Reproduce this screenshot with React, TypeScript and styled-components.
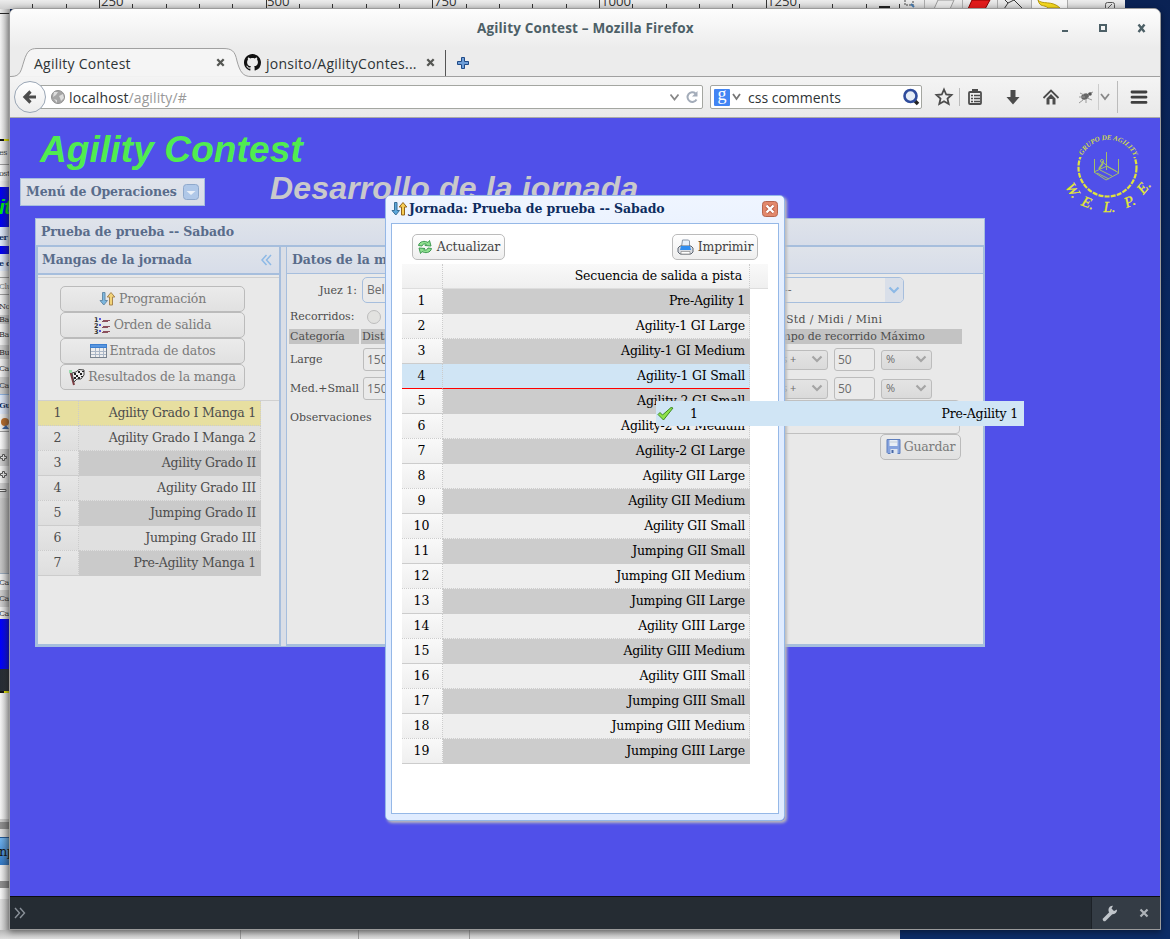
import React from "react";
import styled, { createGlobalStyle, css } from "styled-components";

const slab = `"DejaVu Serif", serif`;
const ui = `"Open Sans", "Noto Sans", sans-serif`;

const Global = createGlobalStyle`
  * { box-sizing: border-box; }
  body { margin: 0; overflow: hidden; }
`;

/* ---------- desktop ---------- */
const Desktop = styled.div`
  position: relative;
  width: 1170px;
  height: 939px;
  overflow: hidden;
  background: linear-gradient(180deg, #0a2254 0%, #082a66 50%, #0c2c66 100%);
  font-family: ${slab};
`;
const EditorWindow = styled.div`
  position: absolute;
  left: 0;
  top: 0;
  width: 1125px;
  height: 9px;
  overflow: hidden;
  background: linear-gradient(#ececec, #cfcfcf);
  svg { display: block; }
`;
const LeftStrip = styled.div`
  position: absolute;
  left: 0;
  top: 9px;
  width: 10px;
  height: 930px;
  display: flex;
  flex-direction: column;
  overflow: hidden;
  background: #ddd;
`;
const StripShade = styled.div`
  position: absolute;
  inset: 0;
  background: linear-gradient(90deg, rgba(60, 60, 60, 0) 0%, rgba(60, 60, 60, 0.38) 100%);
`;
const StripItem = styled.div<{ $h: number; $bg?: string; $c?: string; $bold?: boolean; $slant?: boolean; $s?: number; $top?: string }>`
  flex: none;
  height: ${(p) => p.$h}px;
  background: ${(p) => p.$bg || "#ededed"};
  color: ${(p) => p.$c || "#333"};
  font-weight: ${(p) => (p.$bold ? "bold" : "normal")};
  font-style: ${(p) => (p.$slant ? "italic" : "normal")};
  font-size: ${(p) => p.$s || 8}px;
  font-family: ${(p) => (p.$slant ? `"Liberation Sans", sans-serif` : slab)};
  letter-spacing: -0.5px;
  border-top: ${(p) => (p.$top ? `1px solid ${p.$top}` : "none")};
  display: flex;
  align-items: center;
  justify-content: flex-start;
  text-indent: -1px;
  overflow: hidden;
  white-space: nowrap;
`;
const BottomStrip = styled.div`
  position: absolute;
  left: 0;
  top: 930px;
  width: 900px;
  height: 9px;
  background: linear-gradient(#b5b5b5, #dedede);
  display: flex;
  padding-left: 240px;
  gap: 117px;
  i { width: 1px; height: 9px; background: #999; }
  i:last-child { margin-left: -7px; }
`;

/* ---------- browser window ---------- */
const Browser = styled.div`
  position: absolute;
  left: 9px;
  top: 8px;
  width: 1152px;
  height: 922px;
  border: 1px solid #9b9b9b;
  border-radius: 7px 7px 0 0;
  box-shadow: 0 2px 6px rgba(0, 0, 0, 0.45);
  background: #ececec;
  display: flex;
  flex-direction: column;
  overflow: hidden;
  font-family: ${ui};
`;
const TitleBar = styled.div`
  height: 39px;
  flex: none;
  display: flex;
  align-items: center;
  background: linear-gradient(#fdfdfd, #ececec);
  color: #4d6067;
`;
const TitleText = styled.div`
  width: 220px;
  margin: -1px 0 0 467px;
  white-space: nowrap;
  font: bold 13.5px/20px ${ui};
  letter-spacing: 0.17px;
`;
const WinButtons = styled.div`
  margin-left: auto;
  padding: 0 12px 2px 0;
  svg { display: block; }
`;
const TabBar = styled.div`
  height: 29px;
  flex: none;
  display: flex;
  position: relative;
  background: #ececec;
  color: #2e3436;
  font-size: 14px;
`;
const TabShape = styled.svg`
  position: absolute;
  left: 0;
  top: 0;
`;
const Tab = styled.div<{ $w: number; $pad: number }>`
  position: relative;
  width: ${(p) => p.$w}px;
  padding-left: ${(p) => p.$pad}px;
  display: flex;
  align-items: center;
  white-space: nowrap;
`;
const TabLabel = styled.span<{ $w: number; $pl?: number }>`
  width: ${(p) => p.$w}px;
  letter-spacing: 0.25px;
  line-height: 20px;
  padding-top: 2px;
  padding-left: ${(p) => p.$pl || 0}px;
`;
const NavBar = styled.div`
  height: 41px;
  flex: none;
  display: flex;
  align-items: center;
  position: relative;
  background: linear-gradient(#f4f4f4, #e9e9e9);
  border-bottom: 1px solid #a9a9a9;
  font-size: 14px;
  color: #2e3436;
`;
const BackButton = styled.div`
  width: 32px;
  height: 32px;
  flex: none;
  margin-left: 4px;
  border-radius: 50%;
  border: 1px solid #9aa6b5;
  background: linear-gradient(#fff, #ececec);
  display: flex;
  align-items: center;
  justify-content: center;
  z-index: 1;
`;
const Field = styled.div<{ $w: number; $ml: number; $pl: number }>`
  width: ${(p) => p.$w}px;
  height: 24px;
  flex: none;
  margin-left: ${(p) => p.$ml}px;
  padding-left: ${(p) => p.$pl}px;
  background: #fff;
  border: 1px solid #a4a6a1;
  border-radius: 2px;
  display: flex;
  align-items: center;
  white-space: nowrap;
  svg { flex: none; }
`;
const UrlText = styled.span`
  margin-left: 4px;
  width: 600px;
  padding-top: 1px;
  letter-spacing: 0.1px;
  em { font-style: normal; color: #999; }
`;
const QueryText = styled.span`
  margin-left: 5px;
  padding-top: 1px;
  width: 155px;
`;
const ReloadIcon = styled.svg`
  margin-left: 5px;
`;
const GoogleBadge = styled.span`
  width: 16px;
  height: 17px;
  background: #4285f4;
  color: #fff;
  border-radius: 1px;
  font: 18px/11px "Liberation Serif", serif;
  text-align: center;
`;
const NavIcons = styled.svg`
  display: block;
  flex: none;
  margin-left: 6px;
`;
const DevBar = styled.div`
  height: 33px;
  flex: none;
  border-top: 1px solid #0b0d10;
  background: #252c33;
  display: flex;
  justify-content: space-between;
  align-items: stretch;
`;
const DevPrompt = styled.svg`
  margin: 10px 0 0 4px;
`;
const DevTools = styled.div`
  width: 69px;
  background: #343c45;
  border-left: 1px solid #1c2127;
`;

/* ---------- page ---------- */
const Page = styled.div`
  height: 778px;
  flex: none;
  position: relative;
  background: #5050e9;
  font-family: ${slab};
`;
const PageHeader = styled.header`
  height: 100px;
  display: flex;
  justify-content: space-between;
`;
const Brand = styled.h1`
  margin: 12px 0 -1px 30px;
  font: italic bold 37px/40px "Liberation Sans", sans-serif;
  letter-spacing: 0.12px;
  color: #50ec50;
  white-space: nowrap;
`;
const SubRow = styled.div`
  display: flex;
  align-items: flex-start;
  padding-left: 10px;
`;
const MenuButton = styled.div`
  width: 185px;
  height: 28px;
  margin-top: 9px;
  padding: 0 5px;
  display: flex;
  align-items: center;
  justify-content: space-between;
  border: 1px solid #a6bedd;
  background: linear-gradient(#dfe3ec, #d9dee6);
  color: #596c8b;
  font: bold 12.5px/20px ${slab};
  letter-spacing: -0.09px;
  white-space: nowrap;
`;
const SubTitle = styled.h2`
  margin: 1px 0 0 65px;
  font: italic bold 32px/36px "Liberation Sans", sans-serif;
  letter-spacing: 0.16px;
  color: #c9c9cb;
  white-space: nowrap;
`;
const Logo = styled.svg`
  flex: none;
  margin: 10px 4px 0 0;
`;

const edge = "#a6bedd";
const Panel = styled.section`
  width: 950px;
  height: 429px;
  margin-left: 25px;
  border: 1px solid ${edge};
  display: flex;
  flex-direction: column;
  background: #dadee6;
`;
const BarTitle = styled.div<{ $h: number; $line?: number; $pl?: number }>`
  height: ${(p) => p.$h}px;
  flex: none;
  display: flex;
  align-items: center;
  justify-content: space-between;
  padding: 0 7px 1px ${(p) => p.$pl ?? 5}px;
  border-bottom: ${(p) => p.$line || 1}px solid ${edge};
  background: linear-gradient(#dfe3ea, #d7dde9);
  color: #596c8b;
  font: bold 12.5px/20px ${slab};
  letter-spacing: -0.06px;
  white-space: nowrap;
`;
const Columns = styled.div`
  flex: 1;
  display: flex;
  gap: 5px;
`;
const Side = styled.div`
  width: 245px;
  border: 2px solid ${edge};
  border-top: none;
  background: #e9e9e9;
`;
const Main = styled.div`
  flex: 1;
  border: 1px solid ${edge};
  border-width: 0 1px 2px 1px;
  background: #e9e9e9;
  color: #4d4d4d;
  font-size: 11px;
  letter-spacing: -0.02px;
  overflow: hidden;
`;
const ButtonStack = styled.div`
  margin-top: 2px;
  height: 124px;
  border: 1px solid #d0d0d0;
  border-width: 1px 0;
  padding: 8px 0 0 22px;
  display: flex;
  flex-direction: column;
`;
const Button = styled.div<{ $w: number; $live?: boolean }>`
  width: ${(p) => p.$w}px;
  height: 26px;
  flex: none;
  display: flex;
  align-items: center;
  justify-content: center;
  gap: ${(p) => (p.$live ? 4 : 3)}px;
  border: 1px solid #bbb;
  border-radius: 5px;
  background: ${(p) => (p.$live ? "linear-gradient(#fff, #eee)" : "linear-gradient(#ebebeb, #e1e1e1)")};
  color: ${(p) => (p.$live ? "#444" : "#7b7b7b")};
  font: 12.5px/18px ${slab};
  letter-spacing: ${(p) => (p.$live ? "-0.12px" : "-0.18px")};
  white-space: nowrap;
  svg { flex: none; }
`;

/* ---------- data grid ---------- */
const Grid = styled.div<{ $w: number; $faded?: boolean }>`
  width: ${(p) => p.$w}px;
  font: 12.5px/24px ${slab};
  letter-spacing: -0.23px;
  color: ${(p) => (p.$faded ? "#4d4d4d" : "#000")};
  white-space: nowrap;
`;
type RowTone = "odd" | "even" | "picked" | "drop";
const NumCell = styled.div`
  width: 41px;
  padding-right: 1px;
  text-align: center;
  letter-spacing: 0;
  border-right: 1px dotted #ccc;
  border-bottom: 1px dotted #ccc;
`;
const NameCell = styled.div`
  flex: 1;
  padding-right: 4px;
  text-align: right;
  border-right: 1px dotted #ccc;
  border-bottom: 1px dotted #ccc;
`;
const Row = styled.div<{ $tone: RowTone; $faded?: boolean }>`
  height: 25px;
  display: flex;
  ${NumCell} {
    background: ${(p) => (p.$faded ? "linear-gradient(#e6e6e6, #dedede)" : "linear-gradient(#f9f9f9, #efefef)")};
  }
  ${NameCell} { background: ${(p) => (p.$faded ? "#e0e0e0" : "#eee")}; }
  ${(p) => p.$tone === "odd" && css`
    ${NameCell} { background: ${p.$faded ? "#cacaca" : "#ccc"}; border-color: ${p.$faded ? "#cacaca" : "#ccc"}; }
    ${NumCell} { border-bottom-style: solid; }
  `}
  ${(p) => p.$tone === "picked" && css`
    ${NumCell}, ${NameCell} { background: #e7dfa0; }
  `}
  ${(p) => p.$tone === "drop" && css`
    ${NumCell}, ${NameCell} { background: #d0e5f5; border-bottom: 1px solid red; }
  `}
`;
const GridHead = styled.div`
  width: 366px;
  height: 25px;
  display: flex;
  background: linear-gradient(#f9f9f9, #efefef);
  border-bottom: 1px solid #ddd;
  font: 12.5px/24px ${slab};
  letter-spacing: -0.17px;
  color: #000;
  white-space: nowrap;
  ${NumCell}, ${NameCell} { border-bottom: none; }
  ${NameCell} { flex: none; width: 307px; padding-right: 7px; }
`;

/* ---------- form ---------- */
const Line = styled.div<{ $h: number }>`
  height: ${(p) => p.$h}px;
  padding-left: 3px;
  display: flex;
  align-items: center;
  white-space: nowrap;
`;
const Label = styled.span<{ $w: number; $right?: boolean; $wide?: boolean }>`
  width: ${(p) => p.$w}px;
  flex: none;
  text-align: ${(p) => (p.$right ? "right" : "left")};
  letter-spacing: ${(p) => (p.$wide ? "0.3px" : "inherit")};
  padding-top: ${(p) => (p.$wide ? 5 : 0)}px;
`;
const Gap = styled.span<{ $w: number }>`
  width: ${(p) => p.$w}px;
  flex: none;
`;
const Input = styled.div<{ $w: number; $combo?: boolean; $pl?: number }>`
  width: ${(p) => p.$w}px;
  height: ${(p) => (p.$combo ? 26 : 23)}px;
  flex: none;
  padding-left: ${(p) => p.$pl ?? 3}px;
  display: flex;
  align-items: center;
  justify-content: space-between;
  border: ${(p) => (p.$combo ? `1px solid ${edge}` : "1px solid #bcbcbc")};
  border-radius: ${(p) => (p.$combo ? 5 : 3)}px;
  background: #eaeaea;
  color: #6c6c6c;
  font: 12px/20px ${ui};
  overflow: hidden;
`;
const ComboArrow = styled.span`
  width: 18px;
  align-self: stretch;
  background: #d9dfe9;
  display: flex;
  align-items: center;
  justify-content: center;
`;
const Select = styled.div<{ $w: number; $pl?: number }>`
  width: ${(p) => p.$w}px;
  height: 20px;
  flex: none;
  padding: 0 4px 1px ${(p) => p.$pl ?? 4}px;
  display: flex;
  align-items: center;
  justify-content: space-between;
  border: 1px solid #bcbcbc;
  border-radius: 3px;
  background: linear-gradient(#e4e4e4, #dadada);
  color: #6c6c6c;
  font: 11px/16px ${ui};
`;
const Strip = styled.span<{ $w: number; $first?: boolean }>`
  width: ${(p) => p.$w}px;
  height: 15px;
  line-height: 15px;
  flex: none;
  margin-left: ${(p) => (p.$first ? -1 : 0)}px;
  padding-left: 1px;
  background: #c3c3c3;
`;
const Radio = styled.span`
  width: 14px;
  height: 14px;
  border-radius: 50%;
  border: 1px solid #bdbdbd;
  background: #e2e2e0;
`;
const Notes = styled.div`
  width: 560px;
  height: 34px;
  margin: 0 0 0 22px;
  border: 1px solid #c0c0c0;
  border-radius: 4px;
`;

/* ---------- dialog ---------- */
const Dialog = styled.div`
  position: absolute;
  left: 375px;
  top: 77px;
  width: 400px;
  height: 626px;
  padding: 0 5px 6px;
  border: 1px solid #95b8e7;
  border-radius: 5px;
  background: linear-gradient(#eff5ff, #e0ecff 20%);
  box-shadow: 2px 2px 3px #bbb;
  display: flex;
  flex-direction: column;
`;
const DialogTitle = styled.div`
  height: 27px;
  flex: none;
  display: flex;
  align-items: center;
  padding: 0 1px 1px 0;
  color: #0e2d5f;
  font: bold 12.5px/20px ${slab};
  letter-spacing: -0.08px;
  white-space: nowrap;
  svg { flex: none; margin-right: 1px; }
  svg:last-child { margin: 0 0 0 auto; }
`;
const DialogBody = styled.div`
  flex: 1;
  border: 1px solid #95b8e7;
  background: #fff;
  padding: 10px 10px 0;
`;
const DialogTools = styled.div`
  height: 30px;
  display: flex;
  justify-content: space-between;
  padding: 0 10px;
`;
const DragProxy = styled.div`
  position: absolute;
  left: 646px;
  top: 283px;
  width: 368px;
  height: 25px;
  padding: 0 6px 0 1px;
  display: flex;
  align-items: center;
  justify-content: space-between;
  background: #d0e5f5;
  color: #000;
  font: 12.5px/24px ${slab};
  letter-spacing: -0.2px;
  span { display: flex; align-items: center; gap: 16px; }
`;

/* ---------- icons ---------- */
const SortIcon = ({ dim }: { dim?: boolean }) => (
  <svg width="17" height="16" viewBox="0 0 17 16" opacity={dim ? 0.75 : 1}>
    <path d="M3.500 1.500h2.500v8h2.500L4.800 14 1 9.500h2.500z" fill="#5ba8dd" stroke="#3b6f96" />
    <path d="M10.500 14V6H8.200L12 1.500 15.800 6h-2.300v8z" fill="#f6cd55" stroke="#94661c" />
  </svg>
);
const OrderIcon = () => (
  <svg width="17" height="18" viewBox="0 0 17 18">
    <g fontFamily="DejaVu Sans" fontWeight="bold" fontSize="6.500" fill="#333">
      <text x="0" y="6">1</text><text x="0" y="12">2</text><text x="0" y="18">3</text>
    </g>
    <path d="M5 3h2M5 9h2M5 15h2" stroke="#5656dd" strokeWidth="2" />
    <path d="M9 4.500h7M8 5.500h6M9 10.500h7M8 11.500h6M9 15.500h7M8 16.500h6" stroke="#8a4f5c" />
  </svg>
);
const TableIcon = () => (
  <svg width="17" height="14" viewBox="0 0 17 14">
    <rect x=".5" y=".5" width="16" height="13" fill="#eee" stroke="#78828e" />
    <path d="M0 2h17" stroke="#3c7fd0" strokeWidth="4" />
    <path d="M1 2h15" stroke="#75adee" />
    <path d="M5.500 4v9M9.500 4v9M13.500 4v9M1 7.500h15M1 10.500h15" stroke="#aab6c6" />
  </svg>
);
const FlagIcon = () => (
  <svg width="16" height="17" viewBox="0 0 16 17">
    <path d="M1.500 3L5 16" stroke="#7c3d42" strokeWidth="2" />
    <rect x="0" y="1" width="3" height="3" fill="#9bdcae" />
    <path d="M3 4l4-1 3-2.500L15 1v5l-3 4-4 0-3 3z" fill="#eee" stroke="#444" />
    <path d="M5 4h2v2H5zM9 2h2v2H9zM7 6h2v2H7zM11 4h2v2h-2zM9 8h2v2H9zM5 8h2v2H5zM13 2h2v1h-2zM12 7h2v1h-2z" fill="#222" />
  </svg>
);
const RefreshIcon = () => (
  <svg width="16" height="16" viewBox="0 0 16 16">
    <path d="M1.500 6.500C2.500 2 8 1.500 11 3.500L12.500 1.500l1.500 5.500-6-.5 1.300-1.300C7.500 4.600 5.500 5 5 7z" fill="#8fe08f" stroke="#3f9a52" />
    <path d="M14.500 9.500C13.500 14 8 14.500 5 12.500L3.500 14.500 2 9l6 .5-1.300 1.300c1.800.6 3.800.2 4.300-1.800z" fill="#8fe08f" stroke="#3f9a52" />
  </svg>
);
const PrinterIcon = () => (
  <svg width="17" height="17" viewBox="0 0 17 17">
    <path d="M4.500 8L5.500 1h6l1 1v6z" fill="#e6f0fb" stroke="#8a97a8" />
    <path d="M1 9l2-2h11l2 2v4l-2 2H3l-2-2z" fill="#dadde2" stroke="#5d6570" />
    <path d="M4 7h9l1 4H3z" fill="#2f8df0" />
    <path d="M4 12.500h9v2.500H4z" fill="#fff" stroke="#777" strokeWidth=".6" />
  </svg>
);
const SaveIcon = () => (
  <svg width="15" height="15" viewBox="0 0 14 15">
    <path d="M.5.5h13v14h-12l-1-1z" fill="#86a3de" stroke="#5f7fbd" />
    <rect x="3" y="1" width="8" height="6" fill="#e8eef5" />
    <path d="M3 3h8" stroke="#c4ced8" />
    <rect x="4" y="10" width="7" height="5" fill="#dde4ee" />
    <rect x="5" y="11" width="2" height="3" fill="#4666a5" />
  </svg>
);
const CloseBox = () => (
  <svg width="16" height="16" viewBox="0 0 16 16">
    <rect x=".5" y=".5" width="15" height="15" rx="3" fill="#e2886b" stroke="#b5654e" />
    <path d="M4.500 4.500l7 7M11.500 4.500l-7 7" stroke="#b85b42" strokeWidth="4" />
    <path d="M4.500 4.500l7 7M11.500 4.500l-7 7" stroke="#fff" strokeWidth="2.400" />
  </svg>
);
const Check = () => (
  <svg width="17" height="16" viewBox="0 0 17 16">
    <path d="M1 8.500l2-2 2.500 2.500L14 1.500l2 .5L6.500 14z" fill="#8fe24a" stroke="#3d8a24" strokeLinejoin="round" />
  </svg>
);
const Chevron = ({ color }: { color: string }) => (
  <svg width="12" height="8" viewBox="0 0 12 8">
    <path d="M1.500 1.500L6 6l4.500-4.500" fill="none" stroke={color} strokeWidth="2.200" />
  </svg>
);
const Cross = ({ color }: { color: string }) => (
  <svg width="9" height="9" viewBox="0 0 9 9">
    <path d="M1.300 1.300l6.400 6.400M7.700 1.300L1.300 7.700" stroke={color} strokeWidth="2.300" />
  </svg>
);
const PlusMark = () => (
  <svg width="8" height="8" viewBox="0 0 8 8">
    <path d="M2.500.5h2v2h2v2h-2v2h-2v-2h-2v-2h2z" fill="#eee" stroke="#555" />
  </svg>
);
const Octocat = () => (
  <svg width="17" height="17" viewBox="0 0 16 16">
    <path fill="#111" d="M8 0C3.580 0 0 3.580 0 8c0 3.540 2.290 6.530 5.470 7.590.4.070.55-.17.55-.38 0-.19-.01-.82-.01-1.490-2.010.37-2.530-.49-2.690-.94-.09-.23-.48-.94-.82-1.130-.28-.15-.68-.52-.01-.53.63-.01 1.080.58 1.230.82.72 1.210 1.870.87 2.330.66.070-.52.28-.87.51-1.070-1.780-.2-3.640-.89-3.640-3.950 0-.87.31-1.590.82-2.150-.08-.2-.36-1.020.08-2.120 0 0 .67-.21 2.200.82.64-.18 1.320-.27 2-.27s1.360.090 2 .27c1.530-1.040 2.200-.82 2.200-.82.44 1.100.16 1.920.08 2.120.51.56.82 1.270.82 2.150 0 3.070-1.870 3.750-3.650 3.950.29.25.54.73.54 1.480 0 1.070-.01 1.930-.01 2.200 0 .21.15.46.55.38A8.010 8.010 0 0 0 16 8c0-4.420-3.580-8-8-8z" />
  </svg>
);

/* ---------- data ---------- */
const rounds = ["Agility Grado I Manga 1", "Agility Grado I Manga 2", "Agility Grado II", "Agility Grado III", "Jumping Grado II", "Jumping Grado III", "Pre-Agility Manga 1"];
const sequence = [
  "Pre-Agility 1", "Agility-1 GI Large", "Agility-1 GI Medium", "Agility-1 GI Small", "Agility-2 GI Small",
  "Agility-2 GI Medium", "Agility-2 GI Large", "Agility GII Large", "Agility GII Medium", "Agility GII Small",
  "Jumping GII Small", "Jumping GII Medium", "Jumping GII Large", "Agility GIII Large", "Agility GIII Medium",
  "Agility GIII Small", "Jumping GIII Small", "Jumping GIII Medium", "Jumping GIII Large",
];
const rulerLabels: [number, string][] = [[99, "250"], [265, "500"], [432, "750"], [599, "1000"], [765, "1250"]];

const Ruler = () => (
  <svg width="1125" height="9">
    <g stroke="#333">
      {Array.from({ length: 27 }, (_, i) => {
        const x = Math.round(32.3 + i * 33.33) + 0.5;
        const major = i % 5 === 2;
        return <path key={i} d={`M${x} ${major ? 0 : 4}V8`} />;
      })}
    </g>
    <g fontFamily="Open Sans" fontSize="13.2" fill="#333">
      {rulerLabels.map(([x, t]) => <text key={t} x={x + 2} y="6">{t}</text>)}
    </g>
    <path d="M879 7h11" stroke="#222" strokeWidth="2" />
    <rect x="905" y="-3" width="8" height="8" fill="none" stroke="#444" strokeDasharray="2 1" />
    <path d="M911 4l3 3" stroke="#47a" strokeWidth="2" />
    <path d="M924.500 0v9M962.500 0v9M997.500 0v9M1031.500 0v9M1067.500 0v9" stroke="#aaa" />
    <path d="M938 0h16l-4 9h-16z" fill="#e6e6e6" stroke="#999" />
    <path d="M972 0h18l-5 9h-17z" fill="#e01b1b" stroke="#800" />
    <path d="M1004 9l4-6 6-3 5 5 4 4M1008 3l-3-3" fill="none" stroke="#333" />
    <rect x="1032" width="35" height="9" fill="#f5f5f5" />
    <path d="M1038 0c4 5 14 0 22 8h-12c-4-4-8 0-10-8z" fill="#f4d81f" stroke="#b89b10" />
    <rect x="1105.500" y="2.500" width="9" height="9" rx="2" fill="none" stroke="#555" />
    <path d="M1108 8l4-4" stroke="#555" />
  </svg>
);

const FormRow = ({ label }: { label: string }) => (
  <Line $h={29}>
    <Label $w={73}>{label}</Label>
    <Input $w={41}>150</Input>
    <Gap $w={366} />
    <Select $w={58} $pl={11}><span>s +</span><Chevron color="#a5a5a5" /></Select>
    <Gap $w={6} />
    <Input $w={41}>50</Input>
    <Gap $w={6} />
    <Select $w={51}>%<Chevron color="#a5a5a5" /></Select>
  </Line>
);

export default function App() {
  return (
    <Desktop>
      <Global />
      <EditorWindow><Ruler /></EditorWindow>
      <LeftStrip>
        <StripItem $h={4} $bg="#e8e8e8" />
        <StripItem $h={126} $bg="#f2f2f2" $top="#222" />
        <StripItem $h={2} $bg="linear-gradient(90deg, #111 45%, #ee0 45%)" />
        <StripItem $h={23}>es</StripItem>
        <StripItem $h={17} $bg="#f4f4f4" $top="#999">ost</StripItem>
        <StripItem $h={6} />
        <StripItem $h={40} $bg="#0000ee" $c="#00e810" $bold $slant $s={21}>it</StripItem>
        <StripItem $h={19} $bg="#dce6f7" $c="#0e2d5f" $bold>er</StripItem>
        <StripItem $h={8} $bg="#0000ee" />
        <StripItem $h={17} $bg="#dce6f7" $c="#0e2d5f" $bold>e d</StripItem>
        <StripItem $h={6} />
        <StripItem $h={17} $c="#777" $top="#999">Clu</StripItem>
        <StripItem $h={4} $top="#999" />
        <StripItem $h={17}>Nor</StripItem>
        <StripItem $h={9} $bg="#ccc">Bac</StripItem>
        <StripItem $h={21}>Bai</StripItem>
        <StripItem $h={14} $bg="#ccc">Bus</StripItem>
        <StripItem $h={18}>Car</StripItem>
        <StripItem $h={17} $bg="#ccc">Car</StripItem>
        <StripItem $h={20} $bg="#dce6f7" $c="#0e2d5f" $bold $top="#8ab0e0">Gu</StripItem>
        <StripItem $h={17}>
          <svg width="9" height="12"><circle cx="5" cy="5" r="4" fill="#b56a28" /><path d="M2 12l4-4 3 4z" fill="#3662a3" /></svg>
        </StripItem>
        <StripItem $h={18} $bg="#f6f6f6" $top="#999" />
        <StripItem $h={17} $bg="#ccc"><PlusMark /></StripItem>
        <StripItem $h={17}><PlusMark /></StripItem>
        <StripItem $h={15} $bg="#ccc">
          <svg width="9" height="4" viewBox="0 0 9 4"><path d="M0 .5h6v2H0" fill="#eee" stroke="#555" /></svg>
        </StripItem>
        <StripItem $h={75} $bg="#c4c4c4" />
        <StripItem $h={17} $top="#9ab">Car</StripItem>
        <StripItem $h={17} $bg="#ccc">Car</StripItem>
        <StripItem $h={12}>Car</StripItem>
        <StripItem $h={50} $bg="#0000fa" />
        <StripItem $h={22} $bg="#252c33" />
        <StripItem $h={2} $bg="linear-gradient(90deg, #111 45%, #ee0 45%)" />
        <StripItem $h={126} $bg="#f4f4f4" />
        <StripItem $h={3} $bg="#ccc" />
        <StripItem $h={7} $bg="#8d8d8d" />
        <StripItem $h={8} $bg="#ddd" />
        <StripItem $h={28} $bg="linear-gradient(#6fb2ee, #2f76c4)" $c="#111" $s={13} $top="#1e5594">np</StripItem>
        <StripItem $h={16} $bg="#eee" />
        <StripItem $h={7} $bg="#8d8d8d" />
        <StripItem $h={11} $bg="#f6f6f6" />
        <StripShade />
      </LeftStrip>
      <BottomStrip><i /><i /><i /></BottomStrip>

      <Browser>
        <TitleBar>
          <TitleText>Agility Contest – Mozilla Firefox</TitleText>
          <WinButtons>
            <svg width="88" height="12" viewBox="0 0 88 12" fill="none" stroke="#4d6067">
              <path d="M2 9h6" strokeWidth="2" />
              <rect x="40" y="3" width="6" height="6" strokeWidth="2" />
              <path d="M78.500 2.500l6 7.500M84.500 2.500l-6 7.500" strokeWidth="2.400" />
            </svg>
          </WinButtons>
        </TitleBar>
        <TabBar>
          <TabShape width="1150" height="29" viewBox="0 0 1150 29">
            <path d="M0 28.500H1C11 28.500 11 22 14 13C17 3 20 .5 27 .5H213C222 .5 225 3 227 13C230 24 233 28.500 241 28.500H1150" fill="#f5f5f5" stroke="#a0a0a0" />
            <path d="M435.500 2V28" stroke="#555" />
          </TabShape>
          <Tab $w={233} $pad={24}>
            <TabLabel $w={182}>Agility Contest</TabLabel>
            <Cross color="#555753" />
          </Tab>
          <Tab $w={203} $pad={1}>
            <Octocat />
            <TabLabel $w={165} $pl={5}>jonsito/AgilityContes...</TabLabel>
            <Cross color="#555753" />
          </Tab>
          <Tab $w={40} $pad={11}>
            <svg width="12" height="12" viewBox="0 0 12 12">
              <path d="M4.500.5h3v4h4v3h-4v4h-3v-4h-4v-3h4z" fill="#6f9fd8" stroke="#204a87" />
            </svg>
          </Tab>
        </TabBar>
        <NavBar>
          <BackButton>
            <svg width="16" height="16" viewBox="0 0 16 16"><path d="M8.500 2.500L3 8l5.500 5.500M3 8h11" fill="none" stroke="#4c4c4c" strokeWidth="3.200" /></svg>
          </BackButton>
          <Field $w={666} $ml={-9} $pl={13}>
            <svg width="14" height="14" viewBox="0 0 14 14">
              <circle cx="7" cy="7" r="6.500" fill="#a5a5a5" stroke="#8f8f8f" />
              <path d="M3 2l4 0-2 3-3 2zM8 6l4-2 1 4-3 3-1-3zM3 9l3 1 0 3z" fill="#ddd" />
            </svg>
            <UrlText>localhost<em>/agility/#</em></UrlText>
            <svg width="11" height="8" viewBox="0 0 11 8"><path d="M1.500 1.500l4 5 4-5" fill="none" stroke="#888" strokeWidth="1.800" /></svg>
            <ReloadIcon width="14" height="14" viewBox="0 0 14 14">
              <path d="M11.500 9.500A4.800 4.800 0 1 1 10.500 3.500" fill="none" stroke="#a3acb9" strokeWidth="2" />
              <path d="M12.500 1v5.500H7z" fill="#a3acb9" />
            </ReloadIcon>
          </Field>
          <Field $w={212} $ml={7} $pl={3}>
            <GoogleBadge>g</GoogleBadge>
            <svg width="13" height="8" viewBox="0 0 13 8"><path d="M3 1l3.500 5L10 1" fill="none" stroke="#777" strokeWidth="1.800" /></svg>
            <QueryText>css comments</QueryText>
            <svg width="17" height="18" viewBox="0 0 17 18">
              <path d="M11 12l4 4" stroke="#222" strokeWidth="3.500" />
              <circle cx="7.500" cy="8" r="6" fill="#e6edf7" stroke="#2f4c9c" strokeWidth="2.600" />
            </svg>
          </Field>
          <NavIcons width="226" height="32" viewBox="0 0 226 32" fill="none">
            <path d="M16 8.500l2.200 5 5.300.5-4 3.600 1.200 5.400-4.700-2.800L11.300 23l1.200-5.400-4-3.600 5.300-.5z" stroke="#4c4c4c" strokeWidth="1.800" />
            <path d="M31.500 7v18" stroke="#bbb" />
            <rect x="41" y="11" width="12" height="12" rx="1" stroke="#4c4c4c" strokeWidth="1.800" />
            <path d="M44 9.500h6" stroke="#4c4c4c" strokeWidth="3" />
            <path d="M43 14.500h2M46 14.500h6M43 17.500h2M46 17.500h6M43 20.500h2M46 20.500h6" stroke="#4c4c4c" strokeWidth="1.300" />
            <path d="M82.500 9h5v7h4l-6.500 7.500L78.500 16h4z" fill="#4c4c4c" />
            <path d="M115.500 17l7.500-7.500L130.500 17" stroke="#4c4c4c" strokeWidth="1.800" />
            <path d="M118.500 23.500v-6l4.500-4.500 4.500 4.500v6h-3v-5.500h-3v5.500z" fill="#4c4c4c" />
            <ellipse cx="157" cy="15.500" rx="4" ry="3" fill="#666" transform="rotate(-25 157 15.500)" />
            <path d="M151 16l6 0M155 19l-4 3M158 18l0 4M160 13l5-2M159 17l5 2M152 12l4 2" stroke="#999" />
            <circle cx="162" cy="13" r="1.800" fill="#555" />
            <path d="M170.500 3v26" stroke="#ccc" />
            <path d="M173 13l4 5 4-5" stroke="#888" strokeWidth="1.800" />
            <path d="M189.500 0v32" stroke="#bbb" />
            <path d="M204 11h14M204 16.200h14M204 21.400h14" stroke="#3f3f3f" strokeWidth="2.800" strokeLinecap="round" />
          </NavIcons>
        </NavBar>

        <Page>
          <PageHeader>
            <div>
              <Brand>Agility Contest</Brand>
              <SubRow>
                <MenuButton>
                  Menú de Operaciones
                  <svg width="16" height="16" viewBox="0 0 16 16">
                    <rect x=".5" y=".5" width="15" height="15" rx="3" fill="#b0c8e8" stroke="#8fa9cc" />
                    <path d="M3.500 7h9L8 11z" fill="#eaf0f8" />
                  </svg>
                </MenuButton>
                <SubTitle>Desarrollo de la jornada</SubTitle>
              </SubRow>
            </div>
            <Logo width="94" height="90" viewBox="1062 128 94 90">
              <clipPath id="ringClip"><path d="M1062 157h94v62h-94z" /></clipPath>
              <circle cx="1107.500" cy="167.500" r="29" fill="none" stroke="#dfe33c" strokeWidth="2.200" strokeDasharray="5 1.200" clipPath="url(#ringClip)" />
              <path id="ringTop" d="M1082.500 155.500A28.500 28.500 0 0 1 1134.500 157.500" fill="none" />
              <text fontFamily="Liberation Serif" fontStyle="italic" fontWeight="bold" fontSize="7" fill="#cdd84e">
                <textPath href="#ringTop" textLength="64">GRUPO DE AGILITY</textPath>
              </text>
              <g fontFamily="Liberation Serif" fontStyle="italic" fontSize="15" fill="#e6ea30" stroke="#e6ea30" strokeWidth=".3" textAnchor="middle">
                <text transform="translate(1069 193) rotate(58)">W.</text>
                <text transform="translate(1086.500 207.500) rotate(22)">E.</text>
                <text transform="translate(1109.500 212)">L.</text>
                <text transform="translate(1131.500 206) rotate(-22)">P.</text>
                <text transform="translate(1147.500 190) rotate(-50)">E.</text>
              </g>
              <g stroke="#a3bd6a" fill="none">
                <path d="M1094.500 159v14M1106.500 152v18M1118.500 159v14" />
                <path d="M1094 172l12 8 13-7-12-7zM1097 173l12 6M1100 170l12 6M1102 161l6 6 8 4" />
                <circle cx="1102" cy="161" r="1.500" />
                <path d="M1099 169l4-6" strokeWidth="2" />
              </g>
            </Logo>
          </PageHeader>

          <Panel>
            <BarTitle $h={28} $line={2}>Prueba de prueba -- Sabado</BarTitle>
            <Columns>
              <Side>
                <BarTitle $h={28} $line={2} $pl={4}>
                  Mangas de la jornada
                  <svg width="11" height="12" viewBox="0 0 11 12"><path d="M5.500 1L1 6l4.500 5M10 1L5.500 6l4.500 5" fill="none" stroke="#8db9e6" strokeWidth="1.500" /></svg>
                </BarTitle>
                <ButtonStack>
                  <Button $w={185}><SortIcon dim />Programación</Button>
                  <Button $w={185}><OrderIcon />Orden de salida</Button>
                  <Button $w={185}><TableIcon />Entrada de datos</Button>
                  <Button $w={185}><FlagIcon />Resultados de la manga</Button>
                </ButtonStack>
                <Grid $w={223} $faded>
                  {rounds.map((name, i) => (
                    <Row key={name} $faded $tone={i === 0 ? "picked" : i > 1 && i % 2 === 0 ? "odd" : "even"}>
                      <NumCell>{i + 1}</NumCell>
                      <NameCell>{name}</NameCell>
                    </Row>
                  ))}
                </Grid>
              </Side>
              <Main>
                <BarTitle $h={27}>Datos de la manga</BarTitle>
                <Line $h={32}>
                  <Label $w={67} $right>Juez 1:</Label>
                  <Gap $w={5} />
                  <Input $w={180} $combo $pl={4}>Bel</Input>
                  <Gap $w={221} />
                  <Input $w={141} $combo $pl={16}>---<ComboArrow><Chevron color="#8db9e6" /></ComboArrow></Input>
                </Line>
                <Line $h={21}>
                  <Label $w={77}>Recorridos:</Label>
                  <Radio />
                  <Gap $w={405} />
                  <Label $w={110} $wide>Std / Midi / Mini</Label>
                </Line>
                <Line $h={18}>
                  <Strip $w={70} $first>Categoría</Strip>
                  <Gap $w={2} />
                  <Strip $w={60}>Dist.</Strip>
                  <Gap $w={341} />
                  <Strip $w={200}>Tiempo de recorrido Máximo</Strip>
                </Line>
                <FormRow label="Large" />
                <FormRow label="Med.+Small" />
                <Line $h={28}>
                  <Label $w={88}>Observaciones</Label>
                  <Notes />
                </Line>
                <Line $h={31}>
                  <Gap $w={590} />
                  <Button $w={81}><SaveIcon />Guardar</Button>
                </Line>
              </Main>
            </Columns>
          </Panel>

          <Dialog>
            <DialogTitle><SortIcon />Jornada: Prueba de prueba -- Sabado<CloseBox /></DialogTitle>
            <DialogBody>
              <DialogTools>
                <Button $w={93} $live><RefreshIcon />Actualizar</Button>
                <Button $w={86} $live><PrinterIcon />Imprimir</Button>
              </DialogTools>
              <GridHead>
                <NumCell />
                <NameCell>Secuencia de salida a pista</NameCell>
              </GridHead>
              <Grid $w={348}>
                {sequence.map((name, i) => (
                  <Row key={name} $tone={i === 3 ? "drop" : i % 2 === 0 ? "odd" : "even"}>
                    <NumCell>{i + 1}</NumCell>
                    <NameCell>{name}</NameCell>
                  </Row>
                ))}
              </Grid>
            </DialogBody>
          </Dialog>
          <DragProxy>
            <span><Check />1</span>
            Pre-Agility 1
          </DragProxy>
        </Page>

        <DevBar>
          <DevPrompt width="12" height="12" viewBox="0 0 12 12"><path d="M1 1l4.500 5L1 11M6 1l4.500 5L6 11" fill="none" stroke="#8a9199" strokeWidth="1.400" /></DevPrompt>
          <DevTools>
            <svg width="68" height="32" viewBox="0 0 68 32">
              <path d="M12.500 22.500l7-7" stroke="#c0c5ca" strokeWidth="3.500" strokeLinecap="round" />
              <path d="M25 12.500a4.300 4.300 0 1 1-4-3.800l-1.500 2.800 2.500 2.500z" fill="#c0c5ca" />
              <path d="M48.500 12.500l7 7M55.500 12.500l-7 7" stroke="#aeb3b8" strokeWidth="2.200" />
            </svg>
          </DevTools>
        </DevBar>
      </Browser>
    </Desktop>
  );
}
